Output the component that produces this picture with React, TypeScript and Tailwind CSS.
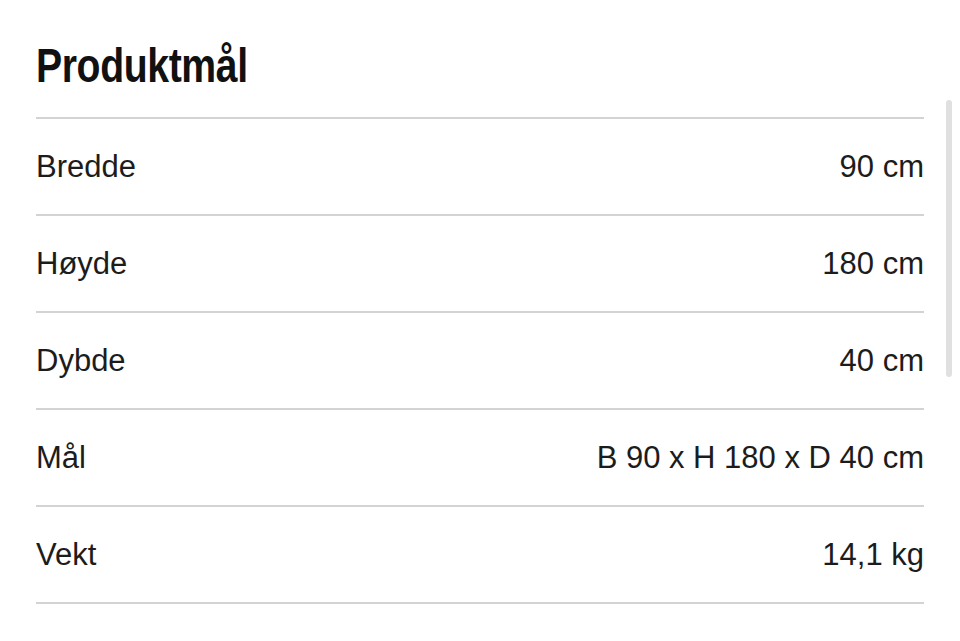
const rows = [
  { label: "Bredde", value: "90 cm" },
  { label: "Høyde", value: "180 cm" },
  { label: "Dybde", value: "40 cm" },
  { label: "Mål", value: "B 90 x H 180 x D 40 cm" },
  { label: "Vekt", value: "14,1 kg" },
];

const App = () => {
  return (
    <div className="relative w-[960px] h-[641px] overflow-hidden bg-white font-['Liberation_Sans',Arial,sans-serif] text-[#1c1c1c]">
      <div className="px-9 pt-[41px]">
        <h2 className="h-[76px] origin-left scale-x-[0.8] text-[49px] leading-none font-bold tracking-[-0.5px] text-[#111]">
          Produktmål
        </h2>
        <div className="border-t-2 border-[#d3d3d3]">
          {rows.map((row) => (
            <div
              key={row.label}
              className="flex h-[97px] items-center justify-between border-b-2 border-[#d3d3d3] pt-[2px] text-[31px]"
            >
              <span>{row.label}</span>
              <span>{row.value}</span>
            </div>
          ))}
        </div>
      </div>
      {/* scroll indicator */}
      <div className="absolute left-[946px] top-[100px] h-[277px] w-[6px] rounded-full bg-[#e0e0e0]" />
    </div>
  );
};

export default App;
